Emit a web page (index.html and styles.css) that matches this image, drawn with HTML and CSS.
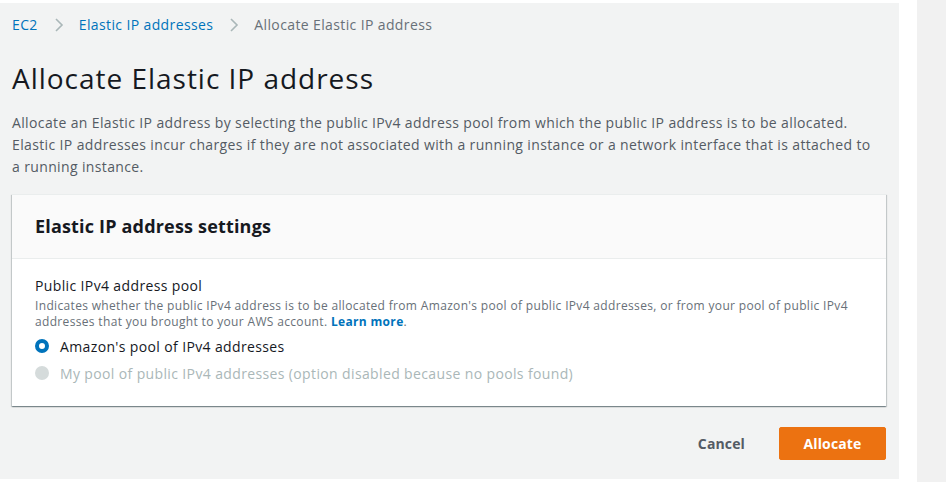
FILE: index.html
```html
<!DOCTYPE html>
<html>
<head>
<meta charset="utf-8">
<link rel="stylesheet" href="styles.css">
</head>
<body>
<div class="layout">
  <main class="main">
    <nav class="crumbs">
      <a class="crumb-link">EC2</a>
      <svg class="chev" width="10" height="16" viewBox="0 0 10 16"><path d="M2 2l6 6-6 6" fill="none" stroke="#aab7b8" stroke-width="1.6"/></svg>
      <a class="crumb-link">Elastic IP addresses</a>
      <svg class="chev" width="10" height="16" viewBox="0 0 10 16"><path d="M2 2l6 6-6 6" fill="none" stroke="#aab7b8" stroke-width="1.6"/></svg>
      <span class="crumb-current">Allocate Elastic IP address</span>
    </nav>
    <h1 class="title">Allocate Elastic IP address</h1>
    <p class="desc">Allocate an Elastic IP address by selecting the public IPv4 address pool from which the public IP address is to be allocated. Elastic IP addresses incur charges if they are not associated with a running instance or a network interface that is attached to a running instance.</p>
    <section class="card">
      <div class="card-head">Elastic IP address settings</div>
      <div class="card-body">
        <div class="field-label">Public IPv4 address pool</div>
        <div class="field-desc">Indicates whether the public IPv4 address is to be allocated from Amazon's pool of public IPv4 addresses, or from your pool of public IPv4 addresses that you brought to your AWS account. <a class="learn">Learn more</a>.</div>
        <div class="radio-row">
          <span class="radio checked"></span>
          <span class="radio-label">Amazon's pool of IPv4 addresses</span>
        </div>
        <div class="radio-row disabled">
          <span class="radio"></span>
          <span class="radio-label">My pool of public IPv4 addresses (option disabled because no pools found)</span>
        </div>
      </div>
    </section>
    <div class="actions">
      <button class="btn-cancel">Cancel</button>
      <button class="btn-primary">Allocate</button>
    </div>
  </main>
  <aside class="side"></aside>
</div>
</body>
</html>
```
FILE: styles.css
```css
html, body {
  margin: 0;
  padding: 0;
  background: #ffffff;
}
body {
  font-family: "Open Sans", "Noto Sans", sans-serif;
  color: #16191f;
  letter-spacing: 0.023em;
}
.layout {
  display: flex;
  height: 482px;
  gap: 18px;
}
.main {
  width: 899px;
  box-sizing: border-box;
  margin-top: 3px;
  height: 476px;
  background: #f2f3f3;
  padding: 0 13px 0 12px;
}
.side {
  flex: 1;
  background: #f1f1f1;
}
.crumbs {
  display: flex;
  align-items: center;
  padding-top: 12px;
  height: 20px;
  font-size: 14px;
  line-height: 20px;
  letter-spacing: 0.027em;
}
.crumb-link {
  color: #0073bb;
}
.chev {
  margin: 0 15px 0 16px;
}
.crumb-current {
  color: #687078;
}
.title {
  margin: 25px 0 0 0;
  font-size: 28px;
  font-weight: 400;
  line-height: 36px;
  color: #16191f;
  letter-spacing: 0.035em;
}
.desc {
  margin: 16px 8px 0 0;
  font-size: 14px;
  line-height: 22px;
  color: #545b64;
}
.card {
  margin-top: 16px;
  background: #ffffff;
  border-top: 1px solid #eaeded;
  box-shadow: 0 1px 1px 0 rgba(0,28,36,.3), 1px 1px 1px 0 rgba(0,28,36,.15), -1px 1px 1px 0 rgba(0,28,36,.15);
}
.card-head {
  background: #fafafa;
  border-bottom: 1px solid #eaeded;
  height: 64px;
  box-sizing: border-box;
  padding: 18px 23px 0;
  font-size: 18px;
  font-weight: 700;
  line-height: 26px;
  letter-spacing: 0.01em;
}
.card-body {
  padding: 17px 23px 23px;
}
.field-label {
  font-size: 14px;
  line-height: 20px;
  color: #16191f;
  margin-bottom: 2px;
}
.field-desc {
  font-size: 12px;
  line-height: 16px;
  color: #687078;
  letter-spacing: 0.028em;
}
.learn {
  color: #0073bb;
  font-weight: 700;
}
.radio-row {
  display: flex;
  align-items: center;
  height: 20px;
  margin-top: 6px;
  font-size: 14px;
  color: #16191f;
}
.radio-row.disabled {
  margin-top: 7px;
  color: #aab7b8;
}
.radio {
  width: 14px;
  height: 14px;
  border-radius: 50%;
  box-sizing: border-box;
  margin-right: 11px;
  background: #d5dbdb;
}
.radio.checked {
  background: #ffffff;
  border: 4px solid #0073bb;
}
.actions {
  display: flex;
  justify-content: flex-end;
  align-items: center;
  margin-top: 21px;
  gap: 20px;
}
.btn-cancel {
  background: transparent;
  border: none;
  font-family: inherit;
  font-size: 14px;
  font-weight: 700;
  color: #545b64;
  padding: 0 14px;
  height: 32px;
  letter-spacing: 0.01em;
}
.btn-primary {
  background: #ec7211;
  border: 1px solid #ec7211;
  border-radius: 2px;
  color: #ffffff;
  font-family: inherit;
  font-size: 14px;
  font-weight: 700;
  height: 33px;
  width: 107px;
  letter-spacing: 0.01em;
}
```
